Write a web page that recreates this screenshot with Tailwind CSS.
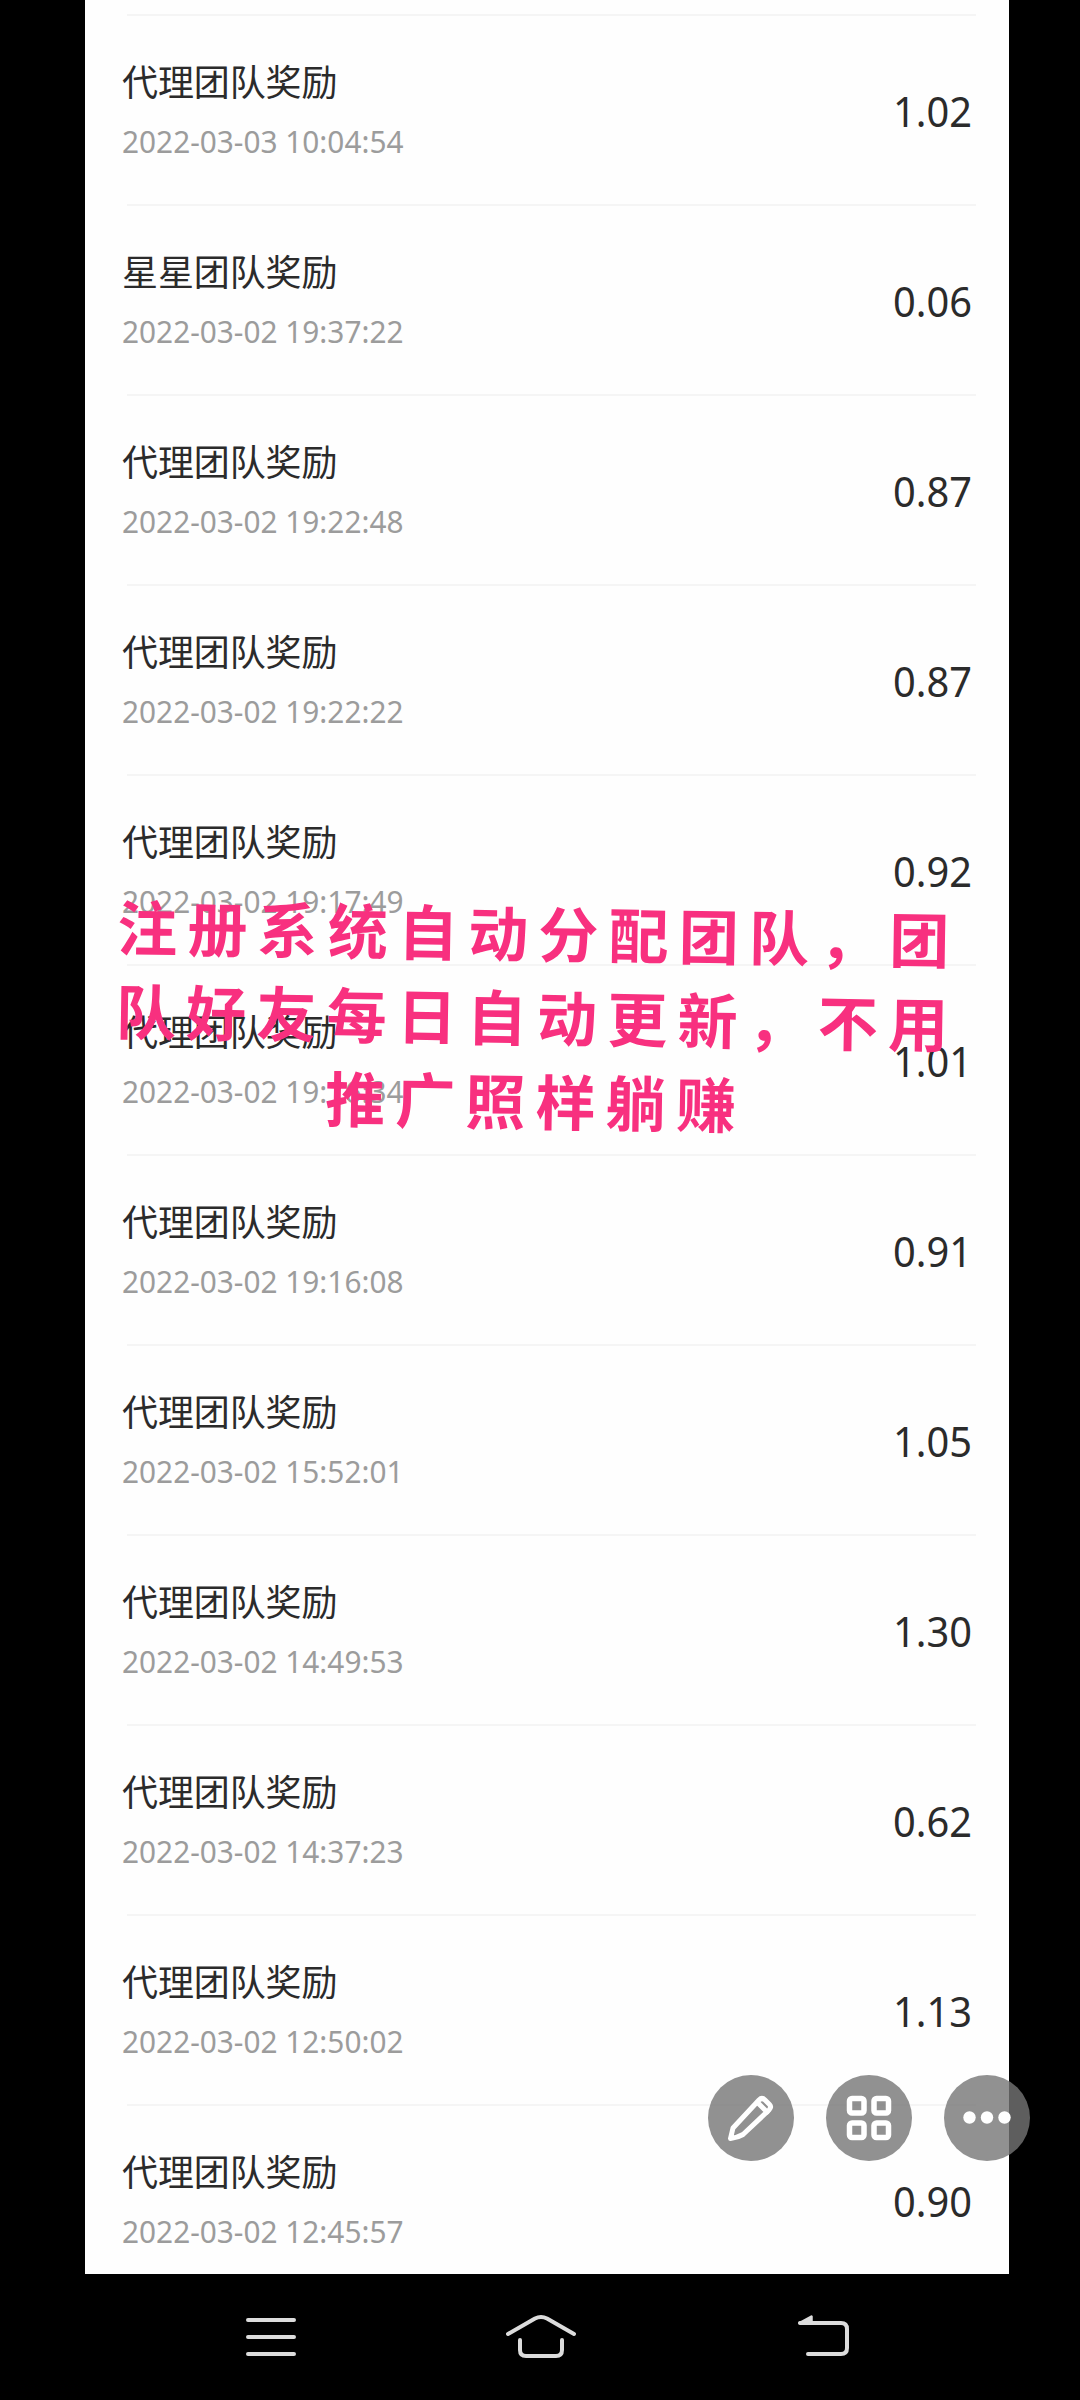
<!DOCTYPE html>
<html lang="zh-CN">
<head>
<meta charset="utf-8">
<title>奖励记录</title>
<script src="https://cdn.jsdelivr.net/npm/@tailwindcss/browser@4"></script>
</head>
<body class="bg-black">
<div class="relative flex h-[2400px] w-[1080px] flex-col overflow-hidden bg-black font-['Noto_Sans','Noto_Sans_CJK_SC',sans-serif]">
  <main id="list" class="ml-[85px] h-[2274px] w-[924px] shrink-0 overflow-hidden bg-[#fefefe] pt-[14px]"></main>

  <nav class="flex h-[126px] w-full shrink-0">
    <svg class="h-full w-full" viewBox="0 2274 1080 126" fill="none" stroke="#dcdcdc" stroke-width="4" stroke-linecap="round" stroke-linejoin="round">
      <path d="M248 2320H294M248 2337H294M248 2354H294"/>
      <path d="M508 2334L535 2318.500Q541 2315.500 547 2318.500L574 2334"/>
      <path d="M520 2340V2350Q520 2356 526 2356H556Q562 2356 562 2350V2340"/>
      <path d="M800 2323H841Q847 2323 847 2329V2348Q847 2354 841 2354H808"/>
      <path d="M799.500 2323L811.500 2316.500V2323Z" fill="#dcdcdc" stroke-width="2.500"/>
    </svg>
  </nav>

  <div class="absolute left-[116px] top-[889px] flex w-[842px] rotate-[0.9deg] flex-col text-[60px] font-bold leading-[84px] tracking-[10.200px] text-[#f8307f] font-['Noto_Sans_CJK_SC',sans-serif]">
    <p class="whitespace-nowrap">注册系统自动分配团队，团</p>
    <p class="whitespace-nowrap">队好友每日自动更新，不用</p>
    <p class="whitespace-nowrap text-center">推广照样躺赚</p>
  </div>

  <div class="absolute left-[708px] top-[2075px] flex gap-8">
    <span class="flex size-[86px] items-center justify-center rounded-full bg-[#757575]/80">
      <svg class="size-[86px]" viewBox="0 0 86 86" fill="none" stroke="#fff" stroke-width="5" stroke-linejoin="round" stroke-linecap="round">
        <path d="M22.500 63.500L25 53L51 25Q54 22 57 25L61.500 29.500Q64 32 61 35L35 59.500Q30 62.500 22.500 63.500Z"/>
        <path d="M49.500 27.500L59 37"/>
      </svg>
    </span>
    <span class="flex size-[86px] items-center justify-center rounded-full bg-[#757575]/80">
      <svg class="size-[86px]" viewBox="0 0 86 86" fill="none" stroke="#fff" stroke-width="5.500">
        <rect x="23.500" y="23.500" width="14.500" height="14.500" rx="2.500"/><rect x="48" y="23.500" width="14.500" height="14.500" rx="2.500"/>
        <rect x="23.500" y="48" width="14.500" height="14.500" rx="2.500"/><rect x="48" y="48" width="14.500" height="14.500" rx="2.500"/>
      </svg>
    </span>
    <span class="flex size-[86px] items-center justify-center rounded-full bg-[#757575]/80">
      <svg class="size-[86px]" viewBox="0 0 86 86" fill="#fff">
        <circle cx="25.500" cy="42.500" r="6.200"/><circle cx="43" cy="42.500" r="6.200"/><circle cx="60.500" cy="42.500" r="6.200"/>
      </svg>
    </span>
  </div>
</div>
<script>
  const rows = [
    ['代理团队奖励', '2022-03-03 10:04:54', '1.02'],
    ['星星团队奖励', '2022-03-02 19:37:22', '0.06'],
    ['代理团队奖励', '2022-03-02 19:22:48', '0.87'],
    ['代理团队奖励', '2022-03-02 19:22:22', '0.87'],
    ['代理团队奖励', '2022-03-02 19:17:49', '0.92'],
    ['代理团队奖励', '2022-03-02 19:16:34', '1.01'],
    ['代理团队奖励', '2022-03-02 19:16:08', '0.91'],
    ['代理团队奖励', '2022-03-02 15:52:01', '1.05'],
    ['代理团队奖励', '2022-03-02 14:49:53', '1.30'],
    ['代理团队奖励', '2022-03-02 14:37:23', '0.62'],
    ['代理团队奖励', '2022-03-02 12:50:02', '1.13'],
    ['代理团队奖励', '2022-03-02 12:45:57', '0.90'],
  ];
  document.getElementById('list').innerHTML = rows.map(([title, time, value]) => `
    <section class="h-[190px]">
      <div class="ml-[42px] h-[2px] w-[849px] bg-[#f5f5f5]"></div>
      <div class="flex h-[188px] justify-between pl-[37px] pr-[37px]">
        <div class="flex flex-col pt-[37px]">
          <span class="text-[36px] leading-[54px] tracking-[-0.100px] text-[#2b2b2b] font-['Noto_Sans_CJK_SC',sans-serif]">${title}</span>
          <span class="mt-[10px] origin-left scale-y-[1.06] text-[29.800px] leading-[48px] text-[#9c9c9c]">${time}</span>
        </div>
        <span class="mt-[68px] h-[56px] scale-y-[1.03] text-[39.800px] leading-[56px] text-[#2b2b2b]">${value}</span>
      </div>
    </section>`).join('');
</script>
</body>
</html>
